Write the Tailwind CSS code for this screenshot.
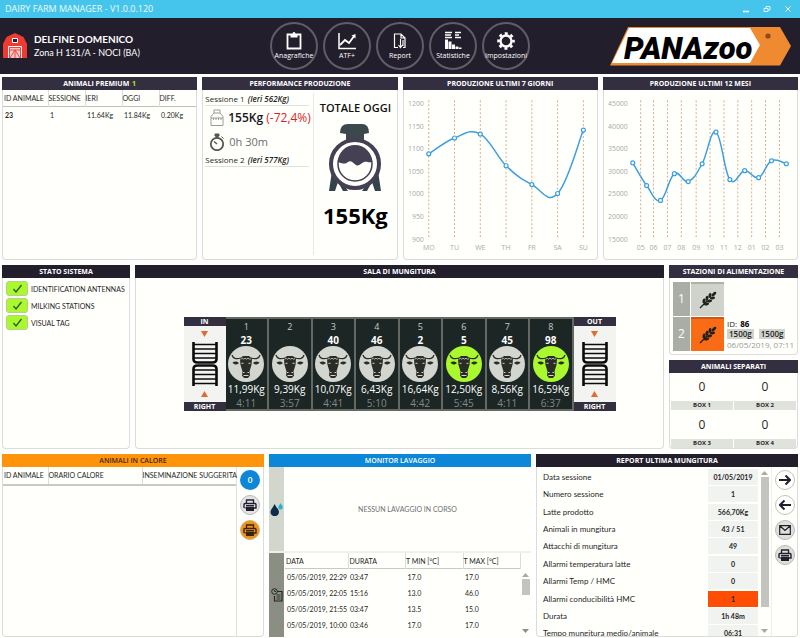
<!DOCTYPE html>
<html lang="it">
  <head>
    <meta charset="UTF-8" />
    <meta name="viewport" content="width=device-width, initial-scale=1.0" />
    <title>Dairy Farm Manager</title>
    <script src="https://cdn.jsdelivr.net/npm/@tailwindcss/browser@4"></script>
  </head>
  <body class="h-screen overflow-hidden flex flex-col bg-white text-[#1f1f27] text-[7px] leading-3 font-['Lato','Open_Sans',sans-serif]">
    <!-- Shared icons -->
    <svg class="hidden">
      <symbol id="cow" viewBox="0 0 36 36">
        <path d="M4 9c1 3.500 4 4.500 9 3M32 9c-1 3.500-4 4.500-9 3" fill="none" stroke="#2b2c28" stroke-width="1.300" />
        <path d="M4.500 16.500c2-1.600 5-1.500 6.500.6-1.500 2-4.500 2-6.500-.6zM31.500 16.500c-2-1.600-5-1.500-6.500.6 1.500 2 4.500 2 6.500-.6z" fill="#2b2c28" />
        <path d="M12 12.500l3-2.500h6l3 2.500-.4 6-2.100 7 .5 4-2 2.500h-4l-2-2.500.5-4-2.100-7z" fill="#2b2c28" />
        <path d="M12.500 13.200l2-.8 1 .8 1.500-1 1.500 1 1.500-1 1.500 1 1.500-.4" fill="none" stroke="#d3d6cf" stroke-width=".8" />
        <path d="M13.500 17.300h2M20.500 17.300h2M15 26.500h1.500M19.500 26.500H21M15.500 29.500h5" fill="none" stroke="#d3d6cf" stroke-width="1" />
      </symbol>
      <symbol id="gate" viewBox="0 0 26 44">
        <g fill="none" stroke="#0b0b0b">
          <path d="M1.500 0v17q0 3.500 4 3.500h15q4 0 4-3.500V0M1.500 44V27q0-3.500 4-3.500h15q4 0 4 3.500v17" stroke-width="2.600" />
          <path d="M1 2.500h24M1 7h24M1 11.500h24M2 16h22M2 28h22M1 32.500h24M1 37h24M1 41.500h24" stroke-width="1.600" />
        </g>
      </symbol>
      <symbol id="printer" viewBox="0 0 14 12">
        <path d="M3.500 4V1h7v3" fill="none" stroke="currentColor" stroke-width="1.300" />
        <path d="M1 9V5.500q0-1 1-1h10q1 0 1 1V9h-2" fill="none" stroke="currentColor" stroke-width="1.400" />
        <path d="M3 9H1.500M3 6.500h8" stroke="currentColor" stroke-width="1.200" />
        <path d="M3 7.500h8V12H3z" fill="currentColor" />
      </symbol>
      <symbol id="wheat" viewBox="0 0 18 18">
        <path d="M1 17L8 10" stroke="#1f221d" stroke-width="1.200" />
        <g fill="#1f221d">
          <ellipse cx="5" cy="10" rx="1.500" ry="2.600" transform="rotate(10 5 10)" />
          <ellipse cx="8" cy="7.300" rx="1.500" ry="2.600" transform="rotate(10 8 7.300)" />
          <ellipse cx="11" cy="4.500" rx="1.500" ry="2.600" transform="rotate(10 11 4.500)" />
          <ellipse cx="7.500" cy="13" rx="2.600" ry="1.500" transform="rotate(-10 7.500 13)" />
          <ellipse cx="10.500" cy="10" rx="2.600" ry="1.500" transform="rotate(-10 10.500 10)" />
          <ellipse cx="13.500" cy="7" rx="2.600" ry="1.500" transform="rotate(-10 13.500 7)" />
          <ellipse cx="15" cy="3" rx="1.500" ry="2.800" transform="rotate(45 15 3)" />
        </g>
      </symbol>
    </svg>

    <!-- Title bar -->
    <div class="h-[18px] shrink-0 bg-[#46c5ec] text-white/90 text-[9px] font-['Open_Sans',sans-serif] flex items-center justify-between pl-[5px] pr-2">
      <h1>DAIRY FARM MANAGER - V1.0.0.120</h1>
      <div class="flex items-center gap-[13px]">
        <button aria-label="Riduci"><svg class="size-2" viewBox="0 0 8 8"><path d="M1 6.500h6" stroke="#fff" stroke-width="1.500" /></svg></button>
        <button aria-label="Ripristina"><svg class="size-2" viewBox="0 0 8 8"><path d="M1 3.500h4v3H1zM3 3.500v-2h4v3.500H5" fill="none" stroke="#fff" stroke-width=".8" /></svg></button>
        <button aria-label="Chiudi"><svg class="size-2" viewBox="0 0 8 8"><path d="M1.500 1.500l5 5M6.500 1.500l-5 5" stroke="#fff" stroke-width="1" /></svg></button>
      </div>
    </div>

    <!-- Header -->
    <header class="h-14 shrink-0 bg-[#221e2c] text-white grid grid-cols-[1fr_auto_1fr] items-center">
      <div class="flex items-center gap-[7px] pl-[3px]">
        <svg class="w-6 h-[26px]" viewBox="0 0 24 26">
          <path d="M0 11L3.500 4 12 0l8.500 4L24 11v14H0z" fill="#ee3a33" />
          <path d="M9.500 5.500h5v4h-5z" fill="#221e2c" stroke="#fff" />
          <path d="M6 14h12v11H6z" fill="#f6c9c5" />
          <path d="M6.500 14.500h11V25M6.500 14.500V25M6 17h12M7 25l5-8 5 8M12 17v8" fill="none" stroke="#ee3a33" stroke-width=".9" />
          <path d="M5.500 25V13.500h13V25" fill="none" stroke="#fff" />
        </svg>
        <div>
          <p class="text-[10px] font-bold leading-[13px]">DELFINE DOMENICO</p>
          <p class="text-[9px] leading-[13px]">Zona H 131/A - NOCI (BA)</p>
        </div>
      </div>
      <nav class="flex gap-[5px] leading-[10px] font-['Open_Sans',sans-serif]">
        <button class="size-12 rounded-full border-2 border-[#605c68] flex flex-col items-center justify-center">
          <svg class="size-5" viewBox="0 0 20 20"><path d="M3.500 3.500h13v14h-13z" fill="none" stroke="#fff" stroke-width="1.800" /><path d="M6.500 3h2q0-2 1.500-2t1.500 2h2v3.500h-7z" fill="#fff" /></svg>
          Anagrafiche
        </button>
        <button class="size-12 rounded-full border-2 border-[#605c68] flex flex-col items-center justify-center">
          <svg class="size-5" viewBox="0 0 20 20"><path d="M2 2v15.500h17" fill="none" stroke="#fff" stroke-width="1.500" /><path d="M3 14l5-5 4 3 5.500-7.500" fill="none" stroke="#fff" stroke-width="1.800" /><path d="M14.500 4.500L18.500 3v4.500z" fill="#fff" /></svg>
          ATF+
        </button>
        <button class="size-12 rounded-full border-2 border-[#605c68] flex flex-col items-center justify-center">
          <svg class="size-5" viewBox="0 0 20 20"><path d="M8 16.500H4.500V3H11l4 4v9.500h-2M11 3v4h4" fill="none" stroke="#fff" stroke-width="1.200" /><path d="M10.500 8v8M8.500 14l2 2.500 2-2.500M13 9v6" fill="none" stroke="#fff" stroke-width="1.100" /></svg>
          Report
        </button>
        <button class="size-12 rounded-full border-2 border-[#605c68] flex flex-col items-center justify-center">
          <svg class="size-5" viewBox="0 0 20 20"><path d="M2 1.500h7M2 4h6M2 6.500h7M12 1.500h6M12 4h4M12 6.500h6" stroke="#fff" stroke-width="1.300" /><path d="M2 8.500h3V18H2zM5.500 10.500h3V18h-3zM9 13.500h3V18H9zM12.500 15.500h3V18h-3zM16 16.500h2.500V18H16z" fill="#fff" /></svg>
          Statistiche
        </button>
        <button class="size-12 rounded-full border-2 border-[#605c68] flex flex-col items-center justify-center">
          <svg class="size-5" viewBox="0 0 20 20"><circle cx="10" cy="10" r="5.500" fill="none" stroke="#fff" stroke-width="2.400" /><circle cx="10" cy="10" r="7.500" fill="none" stroke="#fff" stroke-width="2.600" stroke-dasharray="2.950 2.940" stroke-dashoffset="1.470" /></svg>
          Impostazioni
        </button>
      </nav>
      <svg class="w-[182px] h-10 justify-self-end mr-2" viewBox="0 0 182 40" role="img" aria-label="PANAzoo">
        <path d="M18 1h152l11 19-11 19.500H0z" fill="#ef8a31" />
        <path d="M19 2h121l10 17-10 18H2z" fill="#fff" />
        <text x="14" y="33" font-family="Roboto" font-size="31" font-weight="900" font-style="italic" fill="#000">PANAzoo</text>
        <circle cx="158" cy="10" r="2.600" fill="#8a4a1e" />
      </svg>
    </header>

    <main class="flex-1 min-h-0 grid grid-rows-3 gap-[5px] px-[2px] pt-[3px] pb-px">
      <!-- Row 1 -->
      <div class="grid grid-cols-4 gap-[5px] min-h-0">
        <section class="bg-[#fffffb] border border-t-0 border-[#dcddd9] rounded-b">
          <h2 class="-mx-px h-[13px] leading-[13px] bg-[#332f40] text-white font-bold text-center font-['Open_Sans',sans-serif]">ANIMALI PREMIUM <span class="text-[#a4e52c] ml-px">1</span></h2>
          <table class="w-full table-fixed text-left">
            <thead>
              <tr class="h-4 border-b border-[#bfc0bc]">
                <th class="w-[45px] pl-px font-normal whitespace-nowrap">ID ANIMALE</th>
                <th class="w-[37px] border-l border-[#dcddd9] font-normal">SESSIONE</th>
                <th class="w-[37px] border-l border-[#dcddd9] font-normal">IERI</th>
                <th class="w-[37px] border-l border-[#dcddd9] font-normal">OGGI</th>
                <th class="border-l border-[#dcddd9] font-normal">DIFF.</th>
              </tr>
            </thead>
            <tbody>
              <tr class="h-[18px]">
                <td class="pl-[2px] font-bold">23</td>
                <td class="pl-[2px]">1</td>
                <td class="pl-[2px]">11.64Kg</td>
                <td class="pl-[2px]">11.84Kg</td>
                <td class="pl-[2px]">0.20Kg</td>
              </tr>
            </tbody>
          </table>
        </section>

        <section class="bg-[#fffffb] border border-t-0 border-[#dcddd9] rounded-b flex flex-col">
          <h2 class="-mx-px h-[13px] leading-[13px] bg-[#332f40] text-white font-bold text-center font-['Open_Sans',sans-serif]">PERFORMANCE PRODUZIONE</h2>
          <div class="flex-1 flex pt-[3px] pb-1 text-[8px] font-['Open_Sans',sans-serif]">
            <div class="w-[111px] pl-[2px] pr-1 border-r border-[#e9eae6] whitespace-nowrap">
              <p class="border-b border-[#e1e2de]">Sessione 1 <b class="ml-px font-semibold italic">(Ieri 562Kg)</b></p>
              <div class="flex items-center gap-1 pl-[5px] h-6 text-[12px] text-[#16161c]">
                <svg class="shrink-0 w-[14px] h-[18px]" viewBox="0 0 14 18"><path d="M4 1h6v3H4zM4 4L1 7.500v9h12v-9L10 4M1 9h12M3.500 9v2M6 9v2M8.500 9v2M11 9v2" fill="none" stroke="#9b9c97" /></svg>
                <p class="font-semibold">155Kg <span class="font-medium text-[#dc1f26]">(-72,4%)</span></p>
              </div>
              <div class="flex items-center gap-1 pl-1 h-6 text-[11px] text-[#6c6d72]">
                <svg class="shrink-0 w-4 h-[18px]" viewBox="0 0 16 18"><circle cx="8" cy="11" r="6.200" fill="none" stroke="#56574f" stroke-width="1.800" /><path d="M6 1h4v2H6zM7 2h2v3H7zM12.500 3.500l2 2" fill="#56574f" stroke="#56574f" /><path d="M8 11L5 8.500" stroke="#56574f" stroke-width="1.500" /></svg>
                <p>0h 30m</p>
              </div>
              <p class="border-b border-[#e1e2de]">Sessione 2 <b class="ml-px font-semibold italic">(Ieri 577Kg)</b></p>
            </div>
            <div class="flex-1 flex flex-col items-center pt-[9px] whitespace-nowrap text-[#111]">
              <p class="text-[11px] leading-3 font-semibold">TOTALE OGGI</p>
              <svg class="w-[54px] h-[70px] mt-[9px]" viewBox="0 0 54 70">
                <path d="M12 10q0-9 8-9h14q7 0 7 9l-5 1v8H18v-8z" fill="#3d484d" />
                <path d="M4 48l-3 20h6l3-9 5 9h5l-7-10zM50 48l3 20h-6l-3-9-5 9h-5l7-10z" fill="#34444a" />
                <circle cx="27" cy="41" r="24" fill="#fffffb" stroke="#454053" stroke-width="4" />
                <circle cx="27" cy="41" r="17" fill="#fffffb" stroke="#454053" stroke-width="1.500" />
                <path d="M10 39a17 17 0 0 1 34 0c-4 1-5-1-8 0s-5 5-8 3-5-5-8-3-4 2-10 0z" fill="#454053" />
              </svg>
              <p class="text-[22px] leading-6 font-bold mt-[10px] text-black">155Kg</p>
            </div>
          </div>
        </section>

        <section class="bg-[#fffffb] border border-t-0 border-[#dcddd9] rounded-b flex flex-col">
          <h2 class="-mx-px h-[13px] leading-[13px] bg-[#332f40] text-white font-bold text-center font-['Open_Sans',sans-serif]">PRODUZIONE ULTIMI 7 GIORNI</h2>
          <svg id="week-chart" class="w-full flex-1 min-h-0 font-['Open_Sans',sans-serif]" viewBox="0 0 195 170"></svg>
        </section>

        <section class="bg-[#fffffb] border border-t-0 border-[#dcddd9] rounded-b flex flex-col">
          <h2 class="-mx-px h-[13px] leading-[13px] bg-[#332f40] text-white font-bold text-center font-['Open_Sans',sans-serif]">PRODUZIONE ULTIMI 12 MESI</h2>
          <svg id="year-chart" class="w-full flex-1 min-h-0 font-['Open_Sans',sans-serif]" viewBox="0 0 195 170"></svg>
        </section>
      </div>

      <!-- Row 2 -->
      <div class="grid grid-cols-[128px_1fr_129px] gap-[5px] min-h-0">
        <section class="bg-[#fffffb] border border-t-0 border-[#dcddd9] rounded-b">
          <h2 class="-mx-px h-[13px] leading-[13px] bg-[#221e2c] text-white font-bold text-center font-['Open_Sans',sans-serif]">STATO SISTEMA</h2>
          <ul class="p-[3px] space-y-[2px] whitespace-nowrap">
            <li class="flex items-center gap-[3px]">
              <span class="shrink-0 w-[22px] h-[15px] rounded-[3px] bg-[#a9f92e] border border-[#b5cf8c] flex items-center justify-center"><svg class="size-[9px]" viewBox="0 0 9 9"><path d="M.5 5l2.500 3L8.500 1" fill="none" stroke="#33551a" stroke-width="1.300" /></svg></span>
              IDENTIFICATION ANTENNAS
            </li>
            <li class="flex items-center gap-[3px]">
              <span class="shrink-0 w-[22px] h-[15px] rounded-[3px] bg-[#a9f92e] border border-[#b5cf8c] flex items-center justify-center"><svg class="size-[9px]" viewBox="0 0 9 9"><path d="M.5 5l2.500 3L8.500 1" fill="none" stroke="#33551a" stroke-width="1.300" /></svg></span>
              MILKING STATIONS
            </li>
            <li class="flex items-center gap-[3px]">
              <span class="shrink-0 w-[22px] h-[15px] rounded-[3px] bg-[#a9f92e] border border-[#b5cf8c] flex items-center justify-center"><svg class="size-[9px]" viewBox="0 0 9 9"><path d="M.5 5l2.500 3L8.500 1" fill="none" stroke="#33551a" stroke-width="1.300" /></svg></span>
              VISUAL TAG
            </li>
          </ul>
        </section>

        <section class="bg-[#fffffb] border border-t-0 border-[#dcddd9] rounded-b flex flex-col">
          <h2 class="-mx-px h-[13px] leading-[13px] bg-[#221e2c] text-white font-bold text-center font-['Open_Sans',sans-serif]">SALA DI MUNGITURA</h2>
          <div class="flex-1 flex items-center justify-center pt-[2px] font-['Open_Sans',sans-serif]">
            <div class="flex h-[94px]">
              <div class="w-[42px] flex flex-col items-center justify-between bg-[#f3f4f1]">
                <p class="w-full h-[9px] leading-[9px] bg-[#332f40] text-white font-bold text-center">IN</p>
                <svg class="w-[7px] h-[6px]" viewBox="0 0 7 6"><path d="M0 0h7L3.500 6z" fill="#df6b2c" /></svg>
                <svg class="w-[26px] h-11"><use href="#gate" /></svg>
                <svg class="w-[7px] h-[6px]" viewBox="0 0 7 6"><path d="M0 6h7L3.500 0z" fill="#df6b2c" /></svg>
                <p class="w-full h-[9px] leading-[9px] bg-[#332f40] text-white font-bold text-center">RIGHT</p>
              </div>
              <div id="stalls" class="grid grid-cols-8 w-[348px]"></div>
              <div class="w-[42px] flex flex-col items-center justify-between bg-[#f3f4f1]">
                <p class="w-full h-[9px] leading-[9px] bg-[#332f40] text-white font-bold text-center">OUT</p>
                <svg class="w-[7px] h-[6px]" viewBox="0 0 7 6"><path d="M0 0h7L3.500 6z" fill="#df6b2c" /></svg>
                <svg class="w-[26px] h-11"><use href="#gate" /></svg>
                <svg class="w-[7px] h-[6px]" viewBox="0 0 7 6"><path d="M0 6h7L3.500 0z" fill="#df6b2c" /></svg>
                <p class="w-full h-[9px] leading-[9px] bg-[#332f40] text-white font-bold text-center">RIGHT</p>
              </div>
            </div>
          </div>
        </section>

        <div class="flex flex-col gap-[5px] min-h-0">
          <section class="flex-1 bg-[#fffffb] border border-t-0 border-[#dcddd9] rounded-b">
            <h2 class="-mx-px h-[13px] leading-[13px] bg-[#332f40] text-white font-bold text-center whitespace-nowrap font-['Open_Sans',sans-serif]">STAZIONI DI ALIMENTAZIONE</h2>
            <div class="pl-[3px] pt-1 space-y-px text-[8px] font-['Open_Sans',sans-serif]">
              <div class="flex gap-px h-[34px]">
                <span class="w-[17px] bg-[#a9ada6] text-white text-[12px] flex items-center justify-center">1</span>
                <span class="w-[33px] bg-[#cfd3cb] border-t-2 border-[#adb1a9] flex items-center justify-center"><svg class="size-[18px]"><use href="#wheat" /></svg></span>
              </div>
              <div class="flex gap-px h-[34px]">
                <span class="w-[17px] bg-[#a9ada6] text-white text-[12px] flex items-center justify-center">2</span>
                <span class="w-[33px] bg-[#f96b14] border-t-2 border-[#c9591a] flex items-center justify-center"><svg class="size-[18px]"><use href="#wheat" /></svg></span>
                <div class="pl-[2px] pt-px leading-[11px] whitespace-nowrap">
                  <p>ID: <b class="text-black ml-px">86</b></p>
                  <p class="flex gap-[5px] font-semibold leading-[10px]"><span class="px-[2px] bg-[#cfd3cb]">1500g</span><span class="px-[2px] bg-[#cfd3cb]">1500g</span></p>
                  <p class="text-[#9a9b98]">06/05/2019, 07:11</p>
                </div>
              </div>
            </div>
          </section>
          <section class="flex-1 bg-[#fffffb] border border-t-0 border-[#dcddd9] rounded-b flex flex-col">
            <h2 class="-mx-px h-[13px] leading-[13px] bg-[#332f40] text-white font-bold text-center font-['Open_Sans',sans-serif]">ANIMALI SEPARATI</h2>
            <div class="flex-1 grid grid-cols-2 gap-x-px px-px text-center text-[12px] font-['Open_Sans',sans-serif]">
              <div class="flex flex-col justify-end"><p class="leading-7">0</p><p class="h-[9px] bg-[#e0e3dc] text-[6px] leading-[9px] font-bold">BOX 1</p></div>
              <div class="flex flex-col justify-end"><p class="leading-7">0</p><p class="h-[9px] bg-[#e0e3dc] text-[6px] leading-[9px] font-bold">BOX 2</p></div>
              <div class="flex flex-col justify-end"><p class="leading-7">0</p><p class="h-[9px] bg-[#e0e3dc] text-[6px] leading-[9px] font-bold">BOX 3</p></div>
              <div class="flex flex-col justify-end"><p class="leading-7">0</p><p class="h-[9px] bg-[#e0e3dc] text-[6px] leading-[9px] font-bold">BOX 4</p></div>
            </div>
          </section>
        </div>
      </div>

      <!-- Row 3 -->
      <div class="grid grid-cols-3 gap-[5px] min-h-0">
        <section class="bg-[#fffffb] border border-t-0 border-[#dcddd9] rounded-b flex flex-col min-h-0">
          <h2 class="-mx-px h-[13px] leading-[13px] bg-[#ff930a] text-[#3c2a12] font-semibold text-center font-['Open_Sans',sans-serif]">ANIMALI IN CALORE</h2>
          <div class="flex-1 flex">
            <div class="flex-1 border-r border-[#e1e2de]">
              <table class="w-full table-fixed text-left whitespace-nowrap">
                <thead>
                  <tr class="h-[18px] border-b-2 border-[#c9cac6]">
                    <th class="w-[45px] pl-px font-normal">ID ANIMALE</th>
                    <th class="border-l border-[#dcddd9] font-normal">ORARIO CALORE</th>
                    <th class="border-l border-[#dcddd9] font-normal">INSEMINAZIONE SUGGERITA</th>
                  </tr>
                </thead>
              </table>
            </div>
            <div class="w-[26px] flex flex-col items-center gap-[5px] pt-[3px]">
              <span class="size-5 rounded-full bg-[#0b86d8] text-white text-[8px] font-bold flex items-center justify-center">0</span>
              <button aria-label="Stampa" class="size-5 rounded-full bg-[#e4e4e6] border border-[#b9bab4] text-[#221e2c] flex items-center justify-center"><svg class="w-[14px] h-3"><use href="#printer" /></svg></button>
              <button aria-label="Stampa animali in calore" class="size-5 rounded-full bg-[#ee921f] border border-[#c9b28a] text-[#3a2408] flex items-center justify-center"><svg class="w-[14px] h-3"><use href="#printer" /></svg></button>
            </div>
          </div>
        </section>

        <section class="flex flex-col min-h-0">
          <h2 class="h-[13px] leading-[13px] shrink-0 bg-[#0b86d8] text-white font-semibold text-center font-['Open_Sans',sans-serif]">MONITOR LAVAGGIO</h2>
          <div class="flex-1 flex min-h-0 bg-[#fffffb] border-b-2 border-[#eff0ec]">
            <div class="w-[15px] bg-[#d3d6cd] flex items-center justify-center">
              <svg class="w-[13px] h-[14px]" viewBox="0 0 13 14"><path d="M4.500 2C6 5 9 7.500 9 10a4 4 0 0 1-8.500 0C.5 7.500 3.500 5 4.500 2z" fill="#0d2c4a" /><path d="M10.500 1c.8 1.600 2.300 3 2.300 4.300a2.300 2.300 0 0 1-4.600 0c0-1.300 1.700-2.700 2.300-4.300z" fill="#25b3cf" /></svg>
            </div>
            <p class="flex-1 flex items-center justify-center text-[#6f7073]">NESSUN LAVAGGIO IN CORSO</p>
          </div>
          <div class="flex-1 flex min-h-0 bg-[#fffffb]">
            <div class="w-[15px] bg-[#8b8e82] flex items-center justify-center">
              <svg class="w-3 h-[14px]" viewBox="0 0 12 14"><path d="M6 3.500h5v9.500H3.500V8" fill="none" stroke="#26271f" stroke-width="1.200" /><circle cx="3.500" cy="3.500" r="2.800" fill="none" stroke="#26271f" /><path d="M3.500 2v1.500H5M5.500 7h4M5.500 9h4M5.500 11h4" fill="none" stroke="#26271f" stroke-width=".9" /></svg>
            </div>
            <div class="flex-1 flex pl-px">
              <div class="flex-1">
                <table class="w-full table-fixed text-left whitespace-nowrap">
                  <thead>
                    <tr class="h-4 border-b border-[#c9cac6]">
                      <th class="w-[63px] pl-px font-normal">DATA</th>
                      <th class="border-l border-[#dcddd9] pl-px font-normal">DURATA</th>
                      <th class="border-l border-[#dcddd9] font-normal">T MIN [°C]</th>
                      <th class="border-x border-[#dcddd9] font-normal">T MAX [°C]</th>
                    </tr>
                  </thead>
                  <tbody>
                    <tr class="h-4"><td class="pl-[2px]">05/05/2019, 22:29</td><td class="pl-[2px]">03:47</td><td class="pl-[2px]">17.0</td><td class="pl-[2px]">17.0</td></tr>
                    <tr class="h-4"><td class="pl-[2px]">05/05/2019, 22:05</td><td class="pl-[2px]">15:16</td><td class="pl-[2px]">13.0</td><td class="pl-[2px]">46.0</td></tr>
                    <tr class="h-4"><td class="pl-[2px]">05/05/2019, 21:55</td><td class="pl-[2px]">03:47</td><td class="pl-[2px]">13.5</td><td class="pl-[2px]">15.0</td></tr>
                    <tr class="h-4"><td class="pl-[2px]">05/05/2019, 10:00</td><td class="pl-[2px]">03:46</td><td class="pl-[2px]">17.0</td><td class="pl-[2px]">17.0</td></tr>
                  </tbody>
                </table>
              </div>
              <div class="w-[9px] mr-px pt-5 pb-1 flex flex-col items-center gap-[2px]">
                <svg class="w-[7px] h-1" viewBox="0 0 7 4"><path d="M0 4h7L3.500 0z" fill="#a9aaa6" /></svg>
                <span class="w-2 h-4 bg-[#c3c4c0]"></span>
                <svg class="w-[7px] h-1 mt-auto" viewBox="0 0 7 4"><path d="M0 0h7L3.500 4z" fill="#8d8e8a" /></svg>
              </div>
            </div>
          </div>
        </section>

        <section class="bg-[#fffffb] border border-t-0 border-[#dcddd9] rounded-b flex flex-col min-h-0">
          <h2 class="-mx-px h-[13px] leading-[13px] shrink-0 bg-[#221e2c] text-white font-bold text-center font-['Open_Sans',sans-serif]">REPORT ULTIMA MUNGITURA</h2>
          <div class="flex-1 flex min-h-0 pl-[6px]">
            <div class="flex-1 min-h-0 overflow-hidden pt-px">
              <table class="w-full h-[174px] text-left">
                <tbody id="report"></tbody>
              </table>
            </div>
            <div class="w-[14px] pt-1 pb-[3px] flex flex-col items-center gap-[2px] border-r border-[#eeefeb]">
              <svg class="w-[7px] h-1 shrink-0" viewBox="0 0 7 4"><path d="M0 4h7L3.500 0z" fill="#a9aaa6" /></svg>
              <span class="w-2 h-[130px] bg-[#c3c4c0]"></span>
              <svg class="w-[7px] h-1 shrink-0 mt-auto" viewBox="0 0 7 4"><path d="M0 0h7L3.500 4z" fill="#a9aaa6" /></svg>
            </div>
            <div class="w-[25px] flex flex-col items-center gap-[5px] pt-[3px] text-[#221e2c]">
              <button aria-label="Successiva" class="size-5 rounded-full border border-[#c3c4bf] flex items-center justify-center"><svg class="size-3" viewBox="0 0 12 12"><path d="M0 6h11M6.500 1.500L11 6l-4.500 4.500" fill="none" stroke="currentColor" stroke-width="2" /></svg></button>
              <button aria-label="Precedente" class="size-5 rounded-full border border-[#c3c4bf] flex items-center justify-center"><svg class="size-3" viewBox="0 0 12 12"><path d="M12 6H1M5.500 1.500L1 6l4.500 4.500" fill="none" stroke="currentColor" stroke-width="2" /></svg></button>
              <button aria-label="Invia" class="size-5 rounded-full bg-[#dfe0dc] border border-[#b9bab4] flex items-center justify-center"><svg class="w-3 h-[10px]" viewBox="0 0 12 10"><path d="M.7.700h10.600v8.600H.7zM1 1l5 4.500L11 1" fill="none" stroke="currentColor" stroke-width="1.200" /></svg></button>
              <button aria-label="Stampa report" class="size-5 rounded-full bg-[#dfe0dc] border border-[#b9bab4] flex items-center justify-center"><svg class="w-[14px] h-3"><use href="#printer" /></svg></button>
            </div>
          </div>
        </section>
      </div>
    </main>

    <script>
      const stalls = [
        { id: "23", kg: "11,99Kg", time: "4:11" },
        { id: "", kg: "9,39Kg", time: "3:57" },
        { id: "40", kg: "10,07Kg", time: "4:41" },
        { id: "46", kg: "6,43Kg", time: "5:10" },
        { id: "2", kg: "16,64Kg", time: "4:42" },
        { id: "5", kg: "12,50Kg", time: "5:45", active: true },
        { id: "45", kg: "8,56Kg", time: "4:11" },
        { id: "98", kg: "16,59Kg", time: "6:37", active: true },
      ];

      document.getElementById("stalls").innerHTML = stalls
        .map(
          (s, i) => `
            <div class="bg-[#1b2625] border-2 border-[#646963] border-l-0 flex flex-col items-center text-white whitespace-nowrap">
              <p class="text-[9px] leading-[15px] text-[#c9cbc9]">${i + 1}</p>
              <p class="h-3 text-[10px] leading-3 font-bold">${s.id}</p>
              <span class="size-9 rounded-full ${s.active ? "bg-[#a9f92e]" : "bg-[#d3d6cf]"}"><svg class="size-9"><use href="#cow" /></svg></span>
              <p class="text-[10px] leading-[15px]">${s.kg}</p>
              <p class="text-[10px] leading-3 text-[#85888a]">${s.time}</p>
            </div>`
        )
        .join("");

      const report = [
        ["Data sessione", "01/05/2019"],
        ["Numero sessione", "1"],
        ["Latte prodotto", "566,70Kg"],
        ["Animali in mungitura", "43 / 51"],
        ["Attacchi di mungitura", "49"],
        ["Allarmi temperatura latte", "0"],
        ["Allarmi Temp / HMC", "0"],
        ["Allarmi conducibilità HMC", "1", true],
        ["Durata", "1h 48m"],
        ["Tempo mungitura medio/animale", "06:31"],
      ];

      document.getElementById("report").innerHTML = report
        .map(
          ([label, value, alarm]) => `
            <tr>
              <th scope="row" class="pt-px text-[8px] leading-3 font-normal">${label}</th>
              <td class="w-[50px] pt-px"><span class="block h-4 leading-4 text-center font-bold ${alarm ? "bg-[#ff4d05]" : "bg-[#f0f3ef]"}">${value}</span></td>
            </tr>`
        )
        .join("");

      // Disegna guide tratteggiate, etichette, curva e punti
      function drawChart(id, { yLabels, yX, guides, xLabels, points }) {
        const ys = yLabels
          .map((t, i) => `<text x="${yX}" y="${16 + (i * 136.5) / (yLabels.length - 1)}" text-anchor="end">${t}</text>`)
          .join("");
        const xs = guides
          .map(
            (x, i) => `
              <path d="M${x} 10v140" stroke="#d8a98c" stroke-dasharray="2 2" />
              <text x="${x}" y="161" text-anchor="middle">${xLabels[i]}</text>`
          )
          .join("");
        const dots = points
          .map(([x, y]) => `<circle cx="${x}" cy="${y}" r="2" fill="#fffffb" stroke="#3d9fe0" stroke-width="1.200" />`)
          .join("");
        document.getElementById(id).innerHTML = `
          <g font-size="7" fill="#a9aab0">${ys}${xs}</g>
          <path d="${smooth(points)}" fill="none" stroke="#3d9fe0" stroke-width="1.500" />
          ${dots}`;
      }

      // Curva morbida che passa per tutti i punti
      function smooth(p) {
        let d = `M${p[0]}`;
        for (let i = 0; i < p.length - 1; i++) {
          const a = p[i - 1] || p[i];
          const b = p[i];
          const c = p[i + 1];
          const e = p[i + 2] || c;
          d += `C${b[0] + (c[0] - a[0]) / 5} ${b[1] + (c[1] - a[1]) / 5} ${c[0] - (e[0] - b[0]) / 5} ${c[1] - (e[1] - b[1]) / 5} ${c}`;
        }
        return d;
      }

      drawChart("week-chart", {
        yLabels: [1200, 1150, 1100, 1050, 1000, 950, 900],
        yX: 20,
        guides: [25, 51, 77, 103, 129, 155, 181],
        xLabels: ["MO", "TU", "WE", "TH", "FR", "SA", "SU"],
        points: [[25, 64], [51, 48], [77, 44], [103, 76], [129, 95], [155, 104], [181, 40]],
      });

      drawChart("year-chart", {
        yLabels: [45000, 40000, 35000, 30000, 25000, 20000, 15000],
        yX: 24,
        guides: [37, 50, 64, 78, 93, 107, 121, 135, 149, 163, 177],
        xLabels: ["05", "06", "07", "08", "09", "10", "11", "12", "01", "02", "03"],
        points: [[29, 73], [43, 96], [57, 111], [71, 84], [85, 92], [99, 74], [113, 42], [127, 90], [142, 81], [156, 88], [169, 71], [184, 74]],
      });
    </script>
  </body>
</html>
